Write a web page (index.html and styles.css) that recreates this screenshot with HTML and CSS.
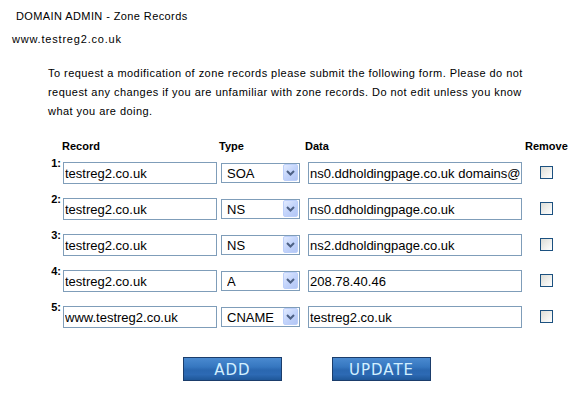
FILE: index.html
```html
<!DOCTYPE html>
<html lang="en">
<head>
    <meta charset="UTF-8">
    <title>DOMAIN ADMIN - Zone Records</title>
    <link rel="stylesheet" href="styles.css">
</head>
<body>
    <div class="title">DOMAIN ADMIN - Zone Records</div>
    <div class="domain">www.testreg2.co.uk</div>

    <div class="content">
        <p class="intro">To request a modification of zone records please submit the following form. Please do not request any changes if you are unfamiliar with zone records. Do not edit unless you know what you are doing.</p>

        <form class="records">
            <div class="head-row">
                <span></span>
                <span>Record</span>
                <span>Type</span>
                <span>Data</span>
                <span>Remove</span>
            </div>

            <div class="rec-row">
                <span class="num">1:</span>
                <input class="field rec" type="text" value="testreg2.co.uk">
                <div class="sel-wrap">
                    <select class="sel"><option selected>SOA</option><option>NS</option><option>A</option><option>CNAME</option><option>MX</option></select>
                    <span class="sel-btn"><svg width="9" height="6" viewBox="0 0 9 6"><path d="M1 1 L4.5 4.5 L8 1" fill="none" stroke="#4d6185" stroke-width="2"/></svg></span>
                </div>
                <input class="field data" type="text" value="ns0.ddholdingpage.co.uk domains@ddholdingpage.co.uk">
                <input class="chk" type="checkbox">
            </div>

            <div class="rec-row">
                <span class="num">2:</span>
                <input class="field rec" type="text" value="testreg2.co.uk">
                <div class="sel-wrap">
                    <select class="sel"><option>SOA</option><option selected>NS</option><option>A</option><option>CNAME</option><option>MX</option></select>
                    <span class="sel-btn"><svg width="9" height="6" viewBox="0 0 9 6"><path d="M1 1 L4.5 4.5 L8 1" fill="none" stroke="#4d6185" stroke-width="2"/></svg></span>
                </div>
                <input class="field data" type="text" value="ns0.ddholdingpage.co.uk">
                <input class="chk" type="checkbox">
            </div>

            <div class="rec-row">
                <span class="num">3:</span>
                <input class="field rec" type="text" value="testreg2.co.uk">
                <div class="sel-wrap">
                    <select class="sel"><option>SOA</option><option selected>NS</option><option>A</option><option>CNAME</option><option>MX</option></select>
                    <span class="sel-btn"><svg width="9" height="6" viewBox="0 0 9 6"><path d="M1 1 L4.5 4.5 L8 1" fill="none" stroke="#4d6185" stroke-width="2"/></svg></span>
                </div>
                <input class="field data" type="text" value="ns2.ddholdingpage.co.uk">
                <input class="chk" type="checkbox">
            </div>

            <div class="rec-row">
                <span class="num">4:</span>
                <input class="field rec" type="text" value="testreg2.co.uk">
                <div class="sel-wrap">
                    <select class="sel"><option>SOA</option><option>NS</option><option selected>A</option><option>CNAME</option><option>MX</option></select>
                    <span class="sel-btn"><svg width="9" height="6" viewBox="0 0 9 6"><path d="M1 1 L4.5 4.5 L8 1" fill="none" stroke="#4d6185" stroke-width="2"/></svg></span>
                </div>
                <input class="field data" type="text" value="208.78.40.46">
                <input class="chk" type="checkbox">
            </div>

            <div class="rec-row">
                <span class="num">5:</span>
                <input class="field rec" type="text" value="www.testreg2.co.uk">
                <div class="sel-wrap">
                    <select class="sel"><option>SOA</option><option>NS</option><option>A</option><option selected>CNAME</option><option>MX</option></select>
                    <span class="sel-btn"><svg width="9" height="6" viewBox="0 0 9 6"><path d="M1 1 L4.5 4.5 L8 1" fill="none" stroke="#4d6185" stroke-width="2"/></svg></span>
                </div>
                <input class="field data" type="text" value="testreg2.co.uk">
                <input class="chk" type="checkbox">
            </div>

            <div class="buttons">
                <button type="button" class="btn">ADD</button>
                <button type="button" class="btn">UPDATE</button>
            </div>
        </form>
    </div>
</body>
</html>
```

FILE: styles.css
```css
body {
    margin: 0;
    font-family: "Liberation Sans", Arial, sans-serif;
    font-size: 11px;
    color: #000;
    background: #fff;
    overflow: hidden;
}
.title {
    line-height: 14px;
    padding: 9px 0 0 16px;
    letter-spacing: 0.4px;
}
.domain {
    line-height: 14px;
    padding: 9px 0 0 12px;
    letter-spacing: 0.8px;
}
.content {
    padding-left: 48px;
}
.intro {
    margin: 18px 0 0 0;
    width: 478px;
    line-height: 19px;
    letter-spacing: 0.45px;
}
.records {
    margin-top: 18px;
}
.head-row {
    display: grid;
    grid-template-columns: 14px 157px 86px 220px auto;
    font-weight: bold;
    line-height: 14px;
    white-space: nowrap;
}
.rec-row {
    display: grid;
    grid-template-columns: 15px 158px 87px 232px 13px;
    align-items: start;
    margin-top: 3px;
    height: 33px;
}
.num {
    font-weight: bold;
    line-height: 14px;
    text-align: right;
    padding-right: 2px;
}
.field {
    box-sizing: border-box;
    margin: 6px 0 0 0;
    height: 22px;
    border: 1px solid #7f9db9;
    padding: 0 1px;
    font-family: "Liberation Sans", Arial, sans-serif;
    font-size: 13px;
    color: #000;
    background: #fff;
    outline: none;
}
.rec {
    width: 154px;
}
.data {
    width: 214px;
}
.sel-wrap {
    position: relative;
    margin-top: 7px;
    width: 79px;
    height: 20px;
}
.sel {
    -webkit-appearance: none;
    appearance: none;
    box-sizing: border-box;
    width: 79px;
    height: 20px;
    margin: 0;
    border: 1px solid #7f9db9;
    border-radius: 0;
    padding: 0 0 0 5px;
    font-family: "Liberation Sans", Arial, sans-serif;
    font-size: 13px;
    color: #000;
    background: #fff;
    outline: none;
}
.sel-btn {
    position: absolute;
    top: 1px;
    right: 2px;
    width: 15px;
    height: 17px;
    box-sizing: border-box;
    border: 1px solid #bccffa;
    border-radius: 2px;
    background: linear-gradient(135deg, #e2ebff 0%, #c3d4fb 50%, #b3c6f5 100%);
    display: flex;
    align-items: center;
    justify-content: center;
    pointer-events: none;
}
.chk {
    -webkit-appearance: none;
    appearance: none;
    box-sizing: border-box;
    width: 13px;
    height: 13px;
    margin: 10px 0 0 0;
    border: 1px solid #1c5180;
    background: linear-gradient(135deg, #dcdcd6 0%, #f2f2ef 60%, #fff 100%);
}
.buttons {
    display: flex;
    gap: 50px;
    margin: 24px 0 0 135px;
}
.btn {
    box-sizing: border-box;
    width: 99px;
    height: 24px;
    border: 1px solid #1b3d6b;
    padding: 2px 0 0 0;
    background: linear-gradient(#4a8ad0 0%, #3677c0 40%, #2a67b0 55%, #2d6ab4 75%, #1f5799 100%);
    color: #d2efff;
    font-family: "DejaVu Sans", sans-serif;
    font-size: 15px;
    letter-spacing: 1px;
    cursor: pointer;
}
```
